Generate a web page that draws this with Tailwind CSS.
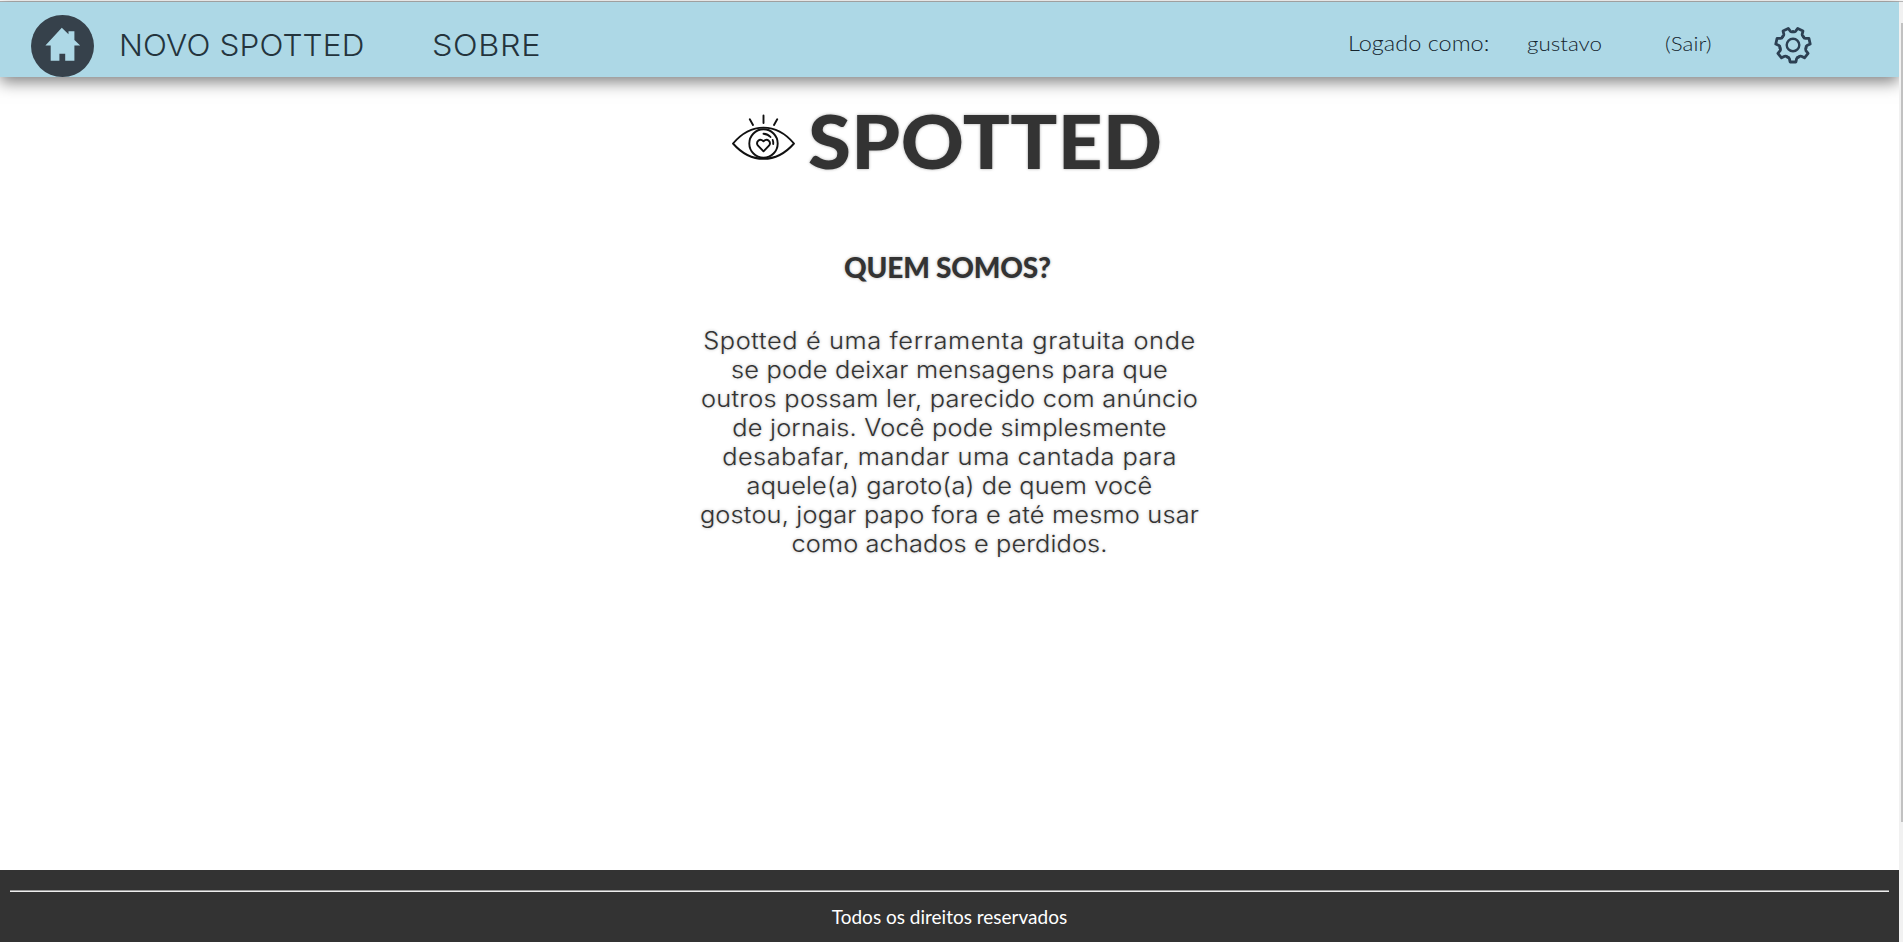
<!DOCTYPE html>
<html lang="pt-BR">
<head>
<meta charset="utf-8">
<title>Spotted</title>
<script src="https://cdn.jsdelivr.net/npm/@tailwindcss/browser@4"></script>
</head>
<body class="flex h-[942px] overflow-hidden bg-white text-[#333]">
<div class="flex w-[1899px] flex-col">
  <div class="mt-px h-px shrink-0 bg-[#b5b5b5]"></div>
  <header class="flex h-[75px] shrink-0 items-start bg-[#add8e6] pl-[31px] font-['Lato',sans-serif] font-light text-[#24343d] shadow-[0_5px_15px_rgba(0,0,0,0.5)]">
    <a class="mt-[13px]">
      <svg class="block" width="63" height="62" viewBox="0 0 63 62"><ellipse cx="31.5" cy="31" rx="31.5" ry="31" fill="#36414b"/><path fill="#add8e6" d="M30.8 12.7 L37.5 19.2 V16.3 H43.4 V25 L49.2 30.4 H43.4 V45.8 H34.2 V38.8 H28.4 V45.8 H19.7 V30.4 H14.4 Z"/></svg>
    </a>
    <a class="mt-[25px] ml-[25px] w-[313px] origin-left scale-x-105 font-['Inter',sans-serif] text-[30px] leading-9 tracking-[0.15px] whitespace-nowrap">NOVO SPOTTED</a>
    <a class="mt-[25px] origin-left scale-x-108 font-['Inter',sans-serif] text-[30px] leading-9 tracking-[0.6px]">SOBRE</a>
    <div class="mt-[28px] ml-auto flex text-[20px] leading-[26px] whitespace-nowrap text-[#14242d]">
      <span class="w-[179px] origin-left scale-x-112 text-[21px]">Logado como:</span>
      <a class="w-[138px] origin-left scale-x-112">gustavo</a>
      <a class="w-[109px] origin-left scale-x-112">(Sair)</a>
    </div>
    <svg class="mt-[23px] mr-[87px]" width="38" height="40" viewBox="-19 -20 38 40" fill="none" stroke="#2c4053" stroke-width="2.8" stroke-linejoin="round" stroke-linecap="round">
      <defs><path id="t" d="M-5.8 12 Q-4.1 12.2 -3.6 13.6 L-2.9 17 H2.9 L3.6 13.6 Q4.1 12.2 5.8 12"/></defs>
      <use href="#t"/><use href="#t" transform="rotate(51.43)"/><use href="#t" transform="rotate(102.86)"/><use href="#t" transform="rotate(154.29)"/><use href="#t" transform="rotate(205.71)"/><use href="#t" transform="rotate(257.14)"/><use href="#t" transform="rotate(308.57)"/>
      <circle r="6.3" stroke-width="2.4"/>
    </svg>
  </header>
  <main class="flex grow flex-col">
    <div class="mt-[18px] flex h-[90px] items-start pl-[726px]">
      <svg class="mt-[10px] shrink-0" width="76" height="64" viewBox="0 0 76 64" fill="none" stroke="#111" stroke-width="1.9" stroke-linecap="round" stroke-linejoin="round">
        <path d="M7 38.5 C25 17.3 50 17.3 68 38.5 C50 59 25 59 7 38.5 Z"/>
        <circle cx="37.5" cy="38.5" r="14.2"/>
        <path d="M37.5 10.5 V18 M23.8 14.3 L27 20 M51.2 14.3 L48 20"/>
        <path d="M37.5 46.3 L32 40.7 C29.3 37 33.5 32.6 37.5 36.3 C41.5 32.6 45.7 37 43 40.7 Z"/>
        <path d="M37.5 28.7 Q42 29 44.5 32 M46.7 35 Q47.5 37 47.2 39"/>
      </svg>
      <h1 class="ml-[6px] origin-left scale-x-104 font-['Lato',sans-serif] text-[75px] leading-[90px] font-black tracking-[0.38px] text-shadow-[0_0_3px_rgba(0,0,0,0.35)]">SPOTTED</h1>
    </div>
    <h2 class="mt-[65px] pr-1 text-center font-['Lato',sans-serif] text-[28px] leading-[34px] font-black tracking-[-0.18px] text-shadow-[0_0_3px_rgba(0,0,0,0.3)]">QUEM SOMOS?</h2>
    <p class="mt-[42px] flex scale-x-108 flex-col items-center font-['Inter',sans-serif] text-[23.5px] leading-[29px] font-light text-shadow-[0_0_3px_rgba(0,0,0,0.3)]">
      <span class="tracking-[0.57px]">Spotted é uma ferramenta gratuita onde</span>
      <span class="tracking-[0.18px]">se pode deixar mensagens para que</span>
      <span class="tracking-[0.25px]">outros possam ler, parecido com anúncio</span>
      <span class="tracking-[0.17px]">de jornais. Você pode simplesmente</span>
      <span class="tracking-[0.42px]">desabafar, mandar uma cantada para</span>
      <span class="tracking-[0.13px]">aquele(a) garoto(a) de quem você</span>
      <span class="tracking-[0.16px]">gostou, jogar papo fora e até mesmo usar</span>
      <span class="tracking-[0.1px]">como achados e perdidos.</span>
    </p>
  </main>
  <footer class="h-[72px] shrink-0 bg-[#333] px-[10px] pt-5 text-center text-white">
    <div class="h-[2px] border-t border-[#999] bg-[#eee]"></div>
    <p class="mt-[13px] font-['Lato',sans-serif] text-[19px] leading-6">Todos os direitos reservados</p>
  </footer>
</div>
<div class="mt-px w-1 border-t border-[#b5b5b5] bg-[#f1f1f1] pt-[21px] pl-[2px]"><div class="h-[799px] bg-[#c1c1c1]"></div></div>
</body>
</html>
